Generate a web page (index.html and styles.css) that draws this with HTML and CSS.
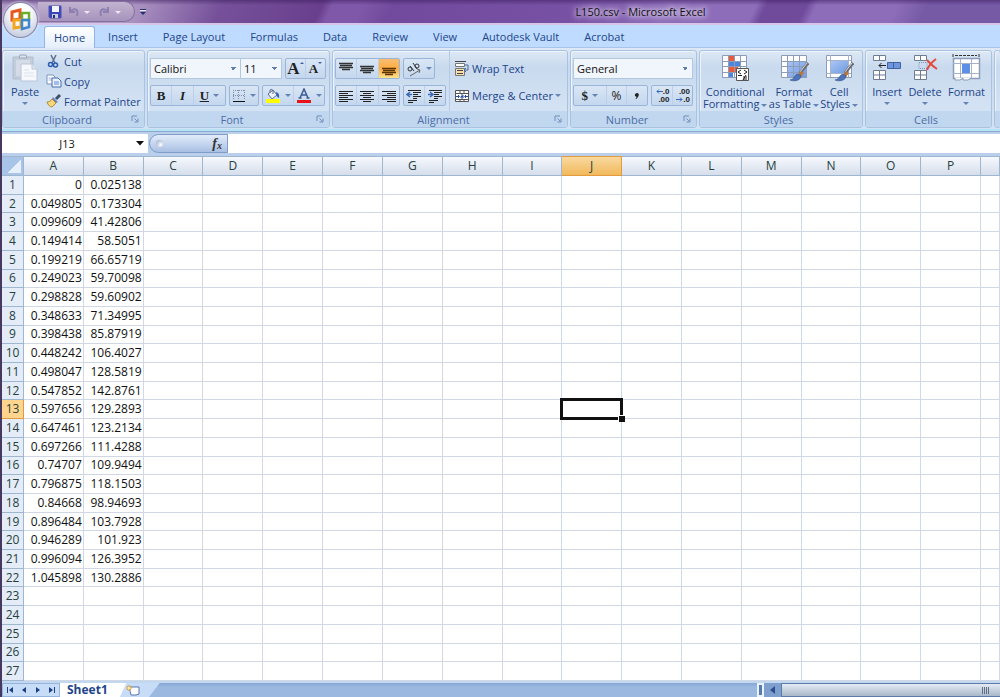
FILE: index.html
```html
<!DOCTYPE html>
<html lang="en">
<head>
<meta charset="utf-8">
<title>L150.csv - Microsoft Excel</title>
<link rel="stylesheet" href="styles.css">
</head>
<body>
<svg class="defs" aria-hidden="true">
  <defs>
    <linearGradient id="sheetBlue" x1="0" y1="0" x2="1" y2="1"><stop offset="0" stop-color="#a9c6f5"/><stop offset="1" stop-color="#6f9ae0"/></linearGradient>
    <symbol id="launch" viewBox="0 0 8 8"><path d="M1 6V1h5M3.500 3.500l3 3M7 3.500V7H3.500" fill="none" stroke="#6f8db8"/></symbol>
    <symbol id="lines-l" viewBox="0 0 16 14"><path d="M1 2.500h14M1 4.500h9M1 6.500h14M1 8.500h9M1 10.500h14M1 12.500h9" stroke="#222"/></symbol>
    <symbol id="lines-c" viewBox="0 0 16 14"><path d="M1 2.500h14M4 4.500h8M1 6.500h14M4 8.500h8M1 10.500h14M4 12.500h8" stroke="#222"/></symbol>
    <symbol id="lines-r" viewBox="0 0 16 14"><path d="M1 2.500h14M6 4.500h9M1 6.500h14M6 8.500h9M1 10.500h14M6 12.500h9" stroke="#222"/></symbol>
    <symbol id="top" viewBox="0 0 16 14"><path d="M1 1.500h14M2 3.500h12M1 5.500h14M4 7.500h8" stroke="#333" stroke-width="1.300"/></symbol>
    <symbol id="mid" viewBox="0 0 16 14"><path d="M1 4.500h14M2 6.500h12M1 8.500h14M4 10.500h8" stroke="#333" stroke-width="1.300"/></symbol>
    <symbol id="bot" viewBox="0 0 16 14"><path d="M1 6.500h14M2 8.500h12M1 10.500h14M4 12.500h8" stroke="#5a3208" stroke-width="1.300"/></symbol>
    <symbol id="brush" viewBox="0 0 20 20"><path d="M19 1l-8 10" stroke="#6b6b75" stroke-width="3"/><path d="M18 1l-7 9" stroke="#d8d8dc"/><path d="M12 9l-3 4 3 2 3-4z" fill="#b8763a"/><path d="M9 12c-4 1-3 5-8 6 5 2 11 0 11-4z" fill="#4d73b8" stroke="#2f4f8c" stroke-width=".6"/></symbol>
  </defs>
</svg>
<div class="app">
  <header class="titlebar">
    <div class="quick">
      <button type="button" aria-label="Save"><svg width="14" height="14" viewBox="0 0 14 14"><path d="M1 1h12v12H2l-1-1z" fill="#3a45b8" stroke="#4a52b4"/><path d="M4 1h7v6H4z" fill="#f3f6ff"/><path d="M4 9h6v4H4z" fill="#c9cde0"/><path d="M5 10h2v3H5z" fill="#272d6f"/></svg></button>
      <button type="button" aria-label="Undo"><svg width="26" height="12" viewBox="0 0 26 12"><path d="M3 1v5h5M3 6c4-5 9-3 7 4" fill="none" stroke="#8d80b0" stroke-width="2"/><path d="M17 5h6l-3 3z" fill="#eee6f4"/></svg></button>
      <button type="button" aria-label="Redo"><svg width="26" height="12" viewBox="0 0 26 12"><path d="M10 1v5H5M10 6C6 1 1 3 3 10" fill="none" stroke="#8d80b0" stroke-width="2"/><path d="M17 5h6l-3 3z" fill="#eee6f4"/></svg></button>
    </div>
    <button class="customize" type="button" aria-label="Customize toolbar"><svg width="8" height="8" viewBox="0 0 8 8"><path d="M1 1.500h6" stroke="#25326e"/><path d="M1 4h6L4 7z" fill="#25326e"/><path d="M1 2.500h6" stroke="#eee"/></svg></button>
    <h1>L150.csv - Microsoft Excel</h1>
    <button class="orb" type="button" aria-label="Office Button"><svg width="24" height="24" viewBox="0 0 24 24" fill="none" stroke-width="3"><path d="M3 4l8-2v9l-8 1z" stroke="#e8581e"/><path d="M13 5h7v7h-7z" stroke="#6fae2c" stroke-width="2.500"/><path d="M5 12h7v7l-7 1z" stroke="#f3a61f"/><path d="M13 12h7v7l-7 2z" stroke="#3f86cf" stroke-width="2.500"/></svg></button>
  </header>
  <nav class="tabs">
    <button class="active" type="button">Home</button><button type="button">Insert</button><button type="button">Page Layout</button><button type="button">Formulas</button><button type="button">Data</button><button type="button">Review</button><button type="button">View</button><button type="button">Autodesk Vault</button><button type="button">Acrobat</button>
  </nav>
  <div class="ribbon">
    <section class="group clipboard">
      <div class="body">
        <button class="big" type="button"><svg width="28" height="30" viewBox="0 0 28 30"><path d="M2 4h20v22H2z" fill="#c3ccda" stroke="#b2bdcd"/><path d="M5 7h14v16H5z" fill="#d5dce7"/><path d="M8 5l1-3h6l1 3z" fill="#dce1ea" stroke="#9aa6b8"/><path d="M10 11h11l5 5v12H10z" fill="#f6f8fc" stroke="#bac6d8"/><path d="M21 11v5h5" fill="#dfe6f0" stroke="#bac6d8"/><path d="M13 17h5M13 20h10M13 23h10" stroke="#dce3ee"/></svg><span>Paste</span><i class="arrow"></i></button>
        <div class="stack">
          <button class="line" type="button"><svg width="16" height="14" viewBox="0 0 16 14"><path d="M5 1l4 8M10 1L6 9" stroke="#5c6f90" stroke-width="1.500"/><circle cx="4.500" cy="10.500" r="2" fill="none" stroke="#2b5bb0" stroke-width="1.500"/><circle cx="9.500" cy="11" r="2" fill="none" stroke="#2b5bb0" stroke-width="1.500"/></svg>Cut</button>
          <button class="line" type="button"><svg width="16" height="14" viewBox="0 0 16 14"><path d="M1 1h6l2 2v7H1z" fill="#fff" stroke="#7893c0"/><path d="M2.500 4h4M2.500 6h4" stroke="#9db7e0"/><path d="M6 4h6l3 3v6H6z" fill="#eaf1fd" stroke="#466cae"/><path d="M8 8h5M8 10h5" stroke="#5f89cf"/></svg>Copy</button>
          <button class="line" type="button"><svg width="16" height="14" viewBox="0 0 16 14"><path d="M14 1L10 5" stroke="#41506e" stroke-width="3"/><path d="M7 3l5 5-2 1-4-4z" fill="#6d83b5"/><path d="M6 5l4 4-4 4c-2 0-4-2-5-5 2 0 4-1 5-3z" fill="#f6d77e" stroke="#b58a34"/></svg>Format Painter</button>
        </div>
      </div>
      <footer><h2>Clipboard</h2><button type="button" aria-label="Clipboard options"><svg width="8" height="8"><use href="#launch"/></svg></button></footer>
    </section>
    <section class="group font">
      <div class="body rows">
        <div class="row"><div class="joined"><select class="font-name" aria-label="Font"><option>Calibri</option></select><select class="font-size" aria-label="Font size"><option>11</option></select></div>
          <div class="set"><button class="glyph grow" type="button" aria-label="Increase font size">A<i class="up"></i></button><button class="glyph shrink" type="button" aria-label="Decrease font size">A<i class="down"></i></button></div></div>
        <div class="row"><div class="set biu"><button class="glyph" type="button"><b>B</b></button><button class="glyph" type="button"><em>I</em></button><button class="glyph" type="button"><u>U</u><i class="arrow"></i></button></div>
          <div class="set"><button class="drop" type="button" aria-label="Borders"><svg width="14" height="14" viewBox="0 0 14 14"><path d="M1 1.500h12M1 6.500h12M1.500 1v10M6.500 1v10M12.500 1v10" stroke="#7d8ca8" stroke-dasharray="1 1"/><path d="M1 12.500h12" stroke="#111" stroke-width="1"/></svg><i class="arrow"></i></button></div>
          <div class="set"><button class="drop" type="button" aria-label="Fill color"><svg width="16" height="16" viewBox="0 0 16 16"><path d="M3 6l5-4 4 5-5 4z" fill="#eef3fb" stroke="#5b6f94"/><path d="M5 5V2q2-2 3 1v3" fill="none" stroke="#5b6f94"/><path d="M11 4q4 1 3 6-3-1-3-6z" fill="#3565b8"/><path d="M1 11h14v4H1z" fill="#ff0"/></svg><i class="arrow"></i></button><button class="drop" type="button" aria-label="Font color"><svg width="16" height="16" viewBox="0 0 16 16"><path d="M4 10L8 1l4 9M5.500 7h5M2.500 10h3M10.500 10h3" fill="none" stroke="#3b5a96" stroke-width="1.500"/><path d="M1 12h14v3H1z" fill="#e8131b"/></svg><i class="arrow"></i></button></div></div>
      </div>
      <footer><h2>Font</h2><button type="button" aria-label="Font options"><svg width="8" height="8"><use href="#launch"/></svg></button></footer>
    </section>
    <section class="group alignment">
      <div class="body">
        <div class="rows">
          <div class="row"><div class="set three"><button type="button" aria-label="Top align"><svg width="16" height="14"><use href="#top"/></svg></button><button type="button" aria-label="Middle align"><svg width="16" height="14"><use href="#mid"/></svg></button><button class="on" type="button" aria-label="Bottom align"><svg width="16" height="14"><use href="#bot"/></svg></button></div>
            <div class="set"><button class="drop" type="button" aria-label="Orientation"><svg width="16" height="16" viewBox="0 0 16 16" fill="none" stroke="#333"><path d="M4 15L14 9M11 8l3 1-1 3" stroke="#666"/><ellipse cx="4" cy="8" rx="2" ry="2"/><path d="M4 5l4 5M7 2l4 6"/><circle cx="11" cy="5" r="2"/></svg><i class="arrow"></i></button></div></div>
          <div class="row"><div class="set three"><button type="button" aria-label="Align left"><svg width="16" height="14"><use href="#lines-l"/></svg></button><button type="button" aria-label="Center"><svg width="16" height="14"><use href="#lines-c"/></svg></button><button type="button" aria-label="Align right"><svg width="16" height="14"><use href="#lines-r"/></svg></button></div>
            <div class="set two"><button type="button" aria-label="Decrease indent"><svg width="16" height="14" viewBox="0 0 16 14"><path d="M2 1.500h13M7 3.500h8M7 5.500h5M7 7.500h8M7 9.500h4M2 11.500h9M2 13.500h5" stroke="#222"/><path d="M6 5.500H2M4 3L1 5.500 4 8" fill="none" stroke="#3c68b8" stroke-width="1.500"/></svg></button><button type="button" aria-label="Increase indent"><svg width="16" height="14" viewBox="0 0 16 14"><path d="M2 1.500h13M7 3.500h8M7 5.500h5M7 7.500h8M7 9.500h4M2 11.500h9M2 13.500h5" stroke="#222"/><path d="M1 5.500h4M3 3l3 2.500L3 8" fill="none" stroke="#3c68b8" stroke-width="1.500"/></svg></button></div></div>
        </div>
        <div class="rows wide">
          <button class="line" type="button"><svg width="16" height="16" viewBox="0 0 16 16"><path d="M1.500 2.500h9v3h-9z" fill="#fff" stroke="#777"/><path d="M1.500 7.500h9v7h-9z" fill="#f7dfae" stroke="#777"/><path d="M3 9.500h6M3 12.500h6M1 .500h11" stroke="#444"/><path d="M11 4h3v5h-3M12 7l-2 2 2 2" fill="none" stroke="#47689f"/></svg>Wrap Text</button>
          <button class="line" type="button"><svg width="16" height="14" viewBox="0 0 16 14"><path d="M1.500 1.500h13v11h-13zM1 4.500h14M1 10.500h14M6 1v3M10 1v3M6 10v3M10 10v3" fill="#fff" stroke="#555"/><path d="M2 7.500h3M11 7.500h3M4 6l1.500 1.500L4 9M12 6l-1.500 1.500L12 9M7 6h2v3H7V7.500h2" fill="none" stroke="#2e4f95"/></svg>Merge &amp; Center<i class="arrow"></i></button>
        </div>
      </div>
      <footer><h2>Alignment</h2><button type="button" aria-label="Alignment options"><svg width="8" height="8"><use href="#launch"/></svg></button></footer>
    </section>
    <section class="group number">
      <div class="body rows">
        <select class="format" aria-label="Number format"><option>General</option></select>
        <div class="row"><div class="set money"><button class="glyph" type="button">$<i class="arrow"></i></button><button class="percent" type="button">%</button><button class="glyph" type="button" aria-label="Comma style"><svg width="6" height="10" viewBox="0 0 6 10"><path d="M3 2c3 0 2 4-1 6l-.5-.5C3 6 2.500 5.500 2 5.500 0 5 1 2 3 2z" fill="#222"/></svg></button></div>
          <div class="set decimals"><button type="button" aria-label="Increase decimal"><span class="digits"><svg width="7" height="5" viewBox="0 0 7 5"><path d="M7 2.500H1M3 .5l-2 2 2 2" fill="none" stroke="#3565b8"/></svg>.0</span><span class="digits">.00</span></button><button type="button" aria-label="Decrease decimal"><span class="digits">.00</span><span class="digits"><svg width="7" height="5" viewBox="0 0 7 5"><path d="M0 2.500h6M4 .5l2 2-2 2" fill="none" stroke="#3565b8"/></svg>.0</span></button></div></div>
      </div>
      <footer><h2>Number</h2><button type="button" aria-label="Number options"><svg width="8" height="8"><use href="#launch"/></svg></button></footer>
    </section>
    <section class="group styles">
      <div class="body">
        <button class="big" type="button"><svg width="30" height="30" viewBox="0 0 30 30"><path d="M2 2h25v22H2z" fill="#fff"/><path d="M8 2h6v6H8zM8 13h10v6H8z" fill="#ea5a3c"/><path d="M8 8h12v5H8zM8 19h5v5H8z" fill="#4a86e0"/><path d="M2.500 2.500h24v22h-24zM2 8.500h25M2 13.500h25M2 19.500h25M8.500 2v22M14.500 2v22M20.500 2v22" fill="none" stroke="#8b9bb8"/><path d="M16.500 15.500h12v12h-12z" fill="#fff" stroke="#555"/><path d="M21 17l-3 2 3 2M18 22.500h4M24 17l3 2-3 2M23 24h4M23 26h4M26 22l-3 5" fill="none" stroke="#222"/></svg><span>Conditional<br>Formatting<i class="arrow"></i></span></button>
        <button class="big" type="button"><svg width="30" height="30" viewBox="0 0 30 30"><path d="M2 2h26v23H2z" fill="#fff"/><path d="M8 8h20v17H8z" fill="url(#sheetBlue)"/><path d="M2.500 2.500h25v22h-25zM2 8.500h25M2 13.500h25M2 19.500h25M8.500 2v22M14.500 2v22M20.500 2v22" fill="none" stroke="#8b9bb8"/><use href="#brush" x="10" y="9" width="20" height="20"/></svg><span>Format<br>as Table<i class="arrow"></i></span></button>
        <button class="big" type="button"><svg width="30" height="30" viewBox="0 0 30 30"><path d="M2.500 2.500h25v22h-25z" fill="#fff" stroke="#8b9bb8"/><path d="M2 7.500h25M2 20.500h25M6.500 2v22M24.500 2v22" stroke="#a5b2c9"/><path d="M7 8h17v12H7z" fill="url(#sheetBlue)"/><use href="#brush" x="10" y="9" width="20" height="20"/></svg><span>Cell<br>Styles<i class="arrow"></i></span></button>
      </div>
      <footer><h2>Styles</h2></footer>
    </section>
    <section class="group cells">
      <div class="body">
        <button class="big" type="button"><svg width="30" height="30" viewBox="0 0 30 30"><path d="M1.500 2.500h12v5h-12zM7.500 2v5M1.500 17.500h12v9h-12zM7.500 17v9M1 22h12" fill="#fff" stroke="#6e7c94"/><path d="M15.500 9.500h13v6h-13z" fill="#6f97de" stroke="#4262a0"/><path d="M21.500 10v5" stroke="#4262a0"/><path d="M14 12.500H7M9.500 10L7 12.500 9.500 15" fill="none" stroke="#222"/></svg><span>Insert</span><i class="arrow"></i></button>
        <button class="big" type="button"><svg width="30" height="30" viewBox="0 0 30 30"><path d="M4.500 2.500h12v5h-12zM10.500 2v5M4.500 17.500h12v9h-12zM10.500 17v9M4 22h12" fill="#fff" stroke="#6e7c94"/><path d="M9 9.500h8v6H9z" fill="none" stroke="#7d93bb" stroke-dasharray="1 1"/><path d="M17 7c3 3 5 6 10 9M26 6c-4 3-7 6-9 11" fill="none" stroke="#e34a3e" stroke-width="2"/></svg><span>Delete</span><i class="arrow"></i></button>
        <button class="big" type="button"><svg width="30" height="30" viewBox="0 0 30 30"><path d="M2 1v3M28 1v3M4 2.500h22" stroke="#333" stroke-dasharray="3 1"/><path d="M2.500 5.500h26v20h-26z" fill="#fff" stroke="#8b9bb8" stroke-width="1.500"/><path d="M2 10.500h26M2 20.500h26M9.500 6v19M20.500 6v19" stroke="#a5b2c9"/><path d="M11 11h8v9h-8z" fill="#5d8fe6"/><path d="M4 25v2h5l3-2v2h5l3-2" fill="#fff" stroke="#8b9bb8"/></svg><span>Format</span><i class="arrow"></i></button>
      </div>
      <footer><h2>Cells</h2></footer>
    </section>
    <section class="group rest"><div class="body"></div><footer></footer></section>
  </div>
  <div class="formula">
    <div class="namebox"><input aria-label="Name box" value="J13"><button type="button" aria-label="Names"><svg width="8" height="5" viewBox="0 0 8 5"><path d="M0 0h8L4 4.500z" fill="#111"/></svg></button></div>
    <div class="fx"><i class="knob"></i><button type="button" aria-label="Insert function">f<sub>x</sub></button></div>
    <input class="entry" aria-label="Formula">
  </div>
  <main class="sheet"><table id="grid"></table></main>
  <footer class="bottom">
    <div class="nav">
      <button type="button" aria-label="First sheet"><svg width="8" height="8" viewBox="0 0 8 8"><path d="M1 1h1v6H1zM7 1v6L3 4z" fill="#1c3f86"/></svg></button>
      <button type="button" aria-label="Previous sheet"><svg width="8" height="8" viewBox="0 0 8 8"><path d="M6 1v6L2 4z" fill="#1c3f86"/></svg></button>
      <button type="button" aria-label="Next sheet"><svg width="8" height="8" viewBox="0 0 8 8"><path d="M2 1v6l4-3z" fill="#1c3f86"/></svg></button>
      <button type="button" aria-label="Last sheet"><svg width="8" height="8" viewBox="0 0 8 8"><path d="M6 1h1v6H6zM1 1v6l4-3z" fill="#1c3f86"/></svg></button>
    </div>
    <button class="sheet-tab" type="button">Sheet1</button>
    <button class="new-tab" type="button" aria-label="Insert worksheet"><svg width="16" height="12" viewBox="0 0 16 12"><path d="M4 3h10v7l-3 1H6z" fill="#fff" stroke="#5877ad"/><path d="M4 1v6M1 4h6M2 2l4 4M6 2L2 6" stroke="#d79a28"/><circle cx="4" cy="4" r="1.500" fill="#ffe89a"/></svg></button>
    <div class="track"><i class="split"></i><button type="button" aria-label="Scroll left"><svg width="5" height="8" viewBox="0 0 5 8"><path d="M5 0v8L0 4z" fill="#2d4f8d"/></svg></button><div class="thumb"><i class="grip"></i></div></div>
  </footer>
</div>
<script src="grid.js"></script>
</body>
</html>
```
FILE: styles.css
```css
* { box-sizing: border-box; }
body { margin: 0; font: 11px/13px "Open Sans", sans-serif; color: #22458a; }
button, input, select { font: inherit; color: inherit; margin: 0; padding: 0; border: 0; background: none; border-radius: 0; white-space: nowrap; }
h1, h2 { margin: 0; font-weight: 400; font-size: 11px; }
i { display: inline-block; flex: none; }
svg { flex: none; display: block; }
.defs { position: absolute; width: 0; height: 0; }
.app { display: flex; flex-direction: column; height: 100vh; overflow: hidden; border-left: 2px solid #47385f; background: #b5cdee; }

.titlebar { position: relative; flex: none; height: 25px; display: flex; align-items: center; gap: 4px; padding-left: 36px; border-bottom: 2px solid #d5c5e8;
  background: linear-gradient(#3d1d5f88, transparent 5px), linear-gradient(115deg, #ae98c4 0 13%, #76519a 22%, #693f8d 32%, #8058a9 33% 36%, #714a9d 39%, #7751a4 57%, #8d6db9 66% 75%, #704b9c 76% 80%, #8d6cb9 81% 89%, #765aa6 92%); }
.quick { display: flex; align-items: center; gap: 5px; height: 21px; width: 97px; padding-left: 10px; border: 1px solid #8571a0; border-left: 0; border-radius: 0 12px 12px 0; background: linear-gradient(#c1b3d0, #a793bc); }
.titlebar h1 { flex: 1; text-align: center; margin-left: 130px; color: #111; text-shadow: 0 0 4px #e4d9f3, 0 0 6px #e4d9f3, 0 0 8px #e4d9f3; }
.orb { position: absolute; left: 1px; top: 2px; z-index: 2; width: 35px; height: 36px; border-radius: 50%; display: grid; place-items: center; border: 1px solid #8789ac; background: radial-gradient(circle at 50% 30%, #fff 30%, #d6dbe8 65%, #b2bcd3); box-shadow: 0 0 3px #eef; }

.tabs { flex: none; display: flex; gap: 1px; height: 23px; padding: 1px 0 0 42px; background: #bfdbff; border-bottom: 1px solid #a7c4ea; }
.tabs button { padding: 0 12px 1px; }
.tabs .active { padding: 0 9px; margin-bottom: -1px; border: 1px solid #94b5e1; border-bottom: 0; border-radius: 3px 3px 0 0; background: linear-gradient(#fff, #e4eefb); }

.ribbon { flex: none; display: flex; gap: 2px; height: 84px; padding: 2px 0 3px; overflow: hidden; background: linear-gradient(#dfe9f6, #c8daf0 18px, #d3e3f5); border-bottom: 1px solid #8ca8cf; box-shadow: inset 0 -2px #b5e4f4; }
.group { flex: none; display: flex; flex-direction: column; border: 1px solid #a9c2e0; border-radius: 3px; background: linear-gradient(#dde8f5, #c9daee 16px, #d8e6f6); box-shadow: inset 1px 1px #edf4fc; overflow: hidden; }
.clipboard { width: 143px; } .font { width: 183px; } .alignment { width: 236px; } .number { width: 127px; } .styles { width: 164px; } .cells { width: 127px; } .rest { flex: 1; min-width: 7px; }
.body { flex: 1; display: flex; min-height: 0; padding: 0 2px; }
.group footer { flex: none; height: 16px; display: flex; align-items: center; padding: 0 5px 0 0; background: #c1d7f0; }
.group h2 { flex: 1; text-align: center; color: #4c6da6; }
.group footer button { height: 8px; }
.rows { display: flex; flex-direction: column; justify-content: flex-start; gap: 6px; padding-top: 7px; }
.row { display: flex; gap: 3px; }
.joined, .set { display: flex; }
.set { flex: none; height: 21px; border: 1px solid #9bb5d9; border-radius: 2px; background: linear-gradient(#d9e6f5, #c4d7ee); color: #222; }
.set button { flex: 1; display: flex; align-items: center; justify-content: center; gap: 4px; }
.set button + button { border-left: 1px solid #bdcfe6; }
select { appearance: none; height: 21px; padding: 0 3px; border: 1px solid #b3c7e1; color: #111; background: linear-gradient(135deg, #5f7eaf 50%, transparent 50%) right 4px top 8px / 3px 3px no-repeat, linear-gradient(225deg, #5f7eaf 50%, transparent 50%) right 7px top 8px / 3px 3px no-repeat, #f1f6fc; }
.font-name { width: 91px; } .font-size { width: 41px; border-left: 0; } .format { width: 120px; }
.arrow { width: 0; height: 0; border: 3px solid transparent; border-top-color: #6583b3; border-bottom: 0; }
.glyph { font: 700 13px/16px "Liberation Serif", serif; }
.grow { font-size: 17px; width: 20px; } .shrink { font-size: 13px; width: 19px; }
.set .grow, .set .shrink { gap: 0; }
.up, .down { align-self: flex-start; margin-top: 3px; border: 2px solid transparent; }
.up { border-bottom-color: #3c62a6; border-top: 0; } .down { border-top-color: #3c62a6; border-bottom: 0; }
.biu { width: 76px; } .biu button:last-child { flex: 1 0 12px; }
.drop { padding: 0 2px; }
.percent { font-size: 12px; }
.three { width: 65px; } .two { width: 43px; }
.three .on { background: linear-gradient(#f8bd74, #ffad3d 50%, #ffe28a); }
.alignment .wide { margin-left: 3px; padding-left: 4px; border-left: 1px solid #b5cae4; }
.line { display: flex; align-items: center; gap: 2px; height: 20px; }
.wide .line { height: 21px; }
.clipboard .body { gap: 7px; padding-left: 8px; }
.big { display: flex; flex-direction: column; align-items: center; padding-top: 2px; line-height: 12px; }
.big > svg { margin-bottom: 3px; }
.big > .arrow { margin-top: 4px; }
.big span { display: block; }
.big span .arrow { vertical-align: middle; margin-left: 2px; }
.styles .body { justify-content: space-between; padding: 0 4px 0 3px; }
.cells .body { justify-content: space-between; padding: 0 6px; }
.money { width: 75px; } .money button:first-child { flex: 1 0 12px; }
.decimals { width: 42px; }
.set.decimals button { flex-direction: column; gap: 0; align-items: flex-end; padding-right: 2px; font: 700 8px/8px "Liberation Sans", sans-serif; }
.digits { display: flex; align-items: center; }

.formula { flex: none; display: flex; height: 24px; padding: 2px 0 3px; background: #b9cfeb; }
.namebox { width: 146px; display: flex; align-items: center; background: #fff; }
.namebox input { flex: 1; min-width: 0; text-align: center; color: #111; }
.namebox button { width: 16px; height: 19px; display: grid; place-items: center; }
.fx { width: 79px; display: flex; align-items: center; justify-content: space-between; margin-left: 1px; padding: 0 5px 0 6px; border: 1px solid #7f9dc8; border-radius: 10px 0 0 10px; background: linear-gradient(#e2ecfa, #a9c0e3); }
.fx button { font: italic 700 14px/14px "Liberation Serif", serif; color: #333; }
.fx sub { font-size: 10px; line-height: 8px; vertical-align: -1px; }
.knob { width: 7px; height: 7px; border-radius: 50%; background: radial-gradient(circle at 70% 70%, #fff, #90a6c8); }
.entry { flex: 1; background: #fff; }

.sheet { flex: 1; min-height: 0; display: flex; background: #fff; border-bottom: 2px solid #c2d8f0; }
table { width: 100%; height: 100%; table-layout: fixed; border-collapse: separate; border-spacing: 0; font: 12px/16px "Open Sans", sans-serif; color: #111; }
th, td { padding: 0; border: solid #d0d7e5; border-width: 0 1px 1px 0; font-weight: 400; overflow: hidden; }
td { text-align: right; padding-right: 1px; }
th { color: #27413e; background: #e4ecf7; border-color: #9eb6ce; }
thead th { height: 20px; background: linear-gradient(#f6f9fd, #d5deeb); border-top: 1px solid #9eb6ce; }
th.head { width: 22px; }
th.tail { width: 19px; }
thead th.head { background: linear-gradient(135deg, transparent 50%, #e7effa 50%) 6px 3px / 13px 13px no-repeat, #a9c4e9; }
thead th.picked { background: linear-gradient(#f9d99f, #f1b95c); border-color: #e39a3c; }
tbody th.picked { background: #ffd58d; border-color: #e39a3c; }
td.cursor { position: relative; overflow: visible; }
td.cursor::before { content: ""; position: absolute; inset: -2px; border: 3px solid #111; }
td.cursor::after { content: ""; position: absolute; right: -4px; bottom: -4px; width: 6px; height: 6px; background: #111; border: solid #fff; border-width: 1px 0 0 1px; }

.bottom { flex: none; height: 14px; display: flex; background: linear-gradient(#86a6d3, #9bb8e0 4px); }
.nav { display: flex; width: 58px; background: #c6dcf7; border: 1px solid #94b4de; }
.nav button { flex: 1; display: grid; place-items: center; }
.sheet-tab { padding: 0 9px 0 7px; background: #fff; font: 700 12px/12px "Open Sans", sans-serif; }
.new-tab { width: 43px; padding-left: 8px; clip-path: polygon(0 0, 100% 0, 75% 100%, 0 100%); background: linear-gradient(115deg, #fff 8px, #c6dcf7 9px); }
.track { width: 243px; margin-left: auto; display: flex; }
.split { width: 7px; border: 2px solid #e9f3fd; background: #587cae; }
.track button { width: 17px; display: grid; place-items: center; background: #7f9fce; }
.thumb { flex: 1; display: flex; align-items: center; justify-content: flex-end; padding-right: 10px; border: 1px solid #5d7aa8; border-right: 0; background: linear-gradient(#e4ebf3, #a9b7c9); }
.grip { width: 8px; height: 7px; background: repeating-linear-gradient(90deg, #5f6f87 0 1px, transparent 1px 2px); }
```
FILE: grid.js
```js
const data = [
  ["0", "0.025138"], ["0.049805", "0.173304"], ["0.099609", "41.42806"], ["0.149414", "58.5051"],
  ["0.199219", "66.65719"], ["0.249023", "59.70098"], ["0.298828", "59.60902"], ["0.348633", "71.34995"],
  ["0.398438", "85.87919"], ["0.448242", "106.4027"], ["0.498047", "128.5819"], ["0.547852", "142.8761"],
  ["0.597656", "129.2893"], ["0.647461", "123.2134"], ["0.697266", "111.4288"], ["0.74707", "109.9494"],
  ["0.796875", "118.1503"], ["0.84668", "98.94693"], ["0.896484", "103.7928"], ["0.946289", "101.923"],
  ["0.996094", "126.3952"], ["1.045898", "130.2886"]
];
const columns = [..."ABCDEFGHIJKLMNOP", ""];
const rowCount = 27;
const selected = { column: "J", row: 13 };

const table = document.getElementById("grid");
const headRow = table.createTHead().insertRow();
const addHeader = (row, text, classes) => {
  const th = document.createElement("th");
  th.textContent = text;
  th.className = classes;
  row.append(th);
};

addHeader(headRow, "", "head");
columns.forEach(c => addHeader(headRow, c, c === "" ? "tail" : c === selected.column ? "picked" : ""));

const body = table.createTBody();
for (let r = 1; r <= rowCount; r++) {
  const row = body.insertRow();
  addHeader(row, r, r === selected.row ? "picked" : "");
  columns.forEach((c, i) => {
    const cell = row.insertCell();
    cell.textContent = data[r - 1]?.[i] ?? "";
    if (c === selected.column && r === selected.row) cell.className = "cursor";
  });
}
```
